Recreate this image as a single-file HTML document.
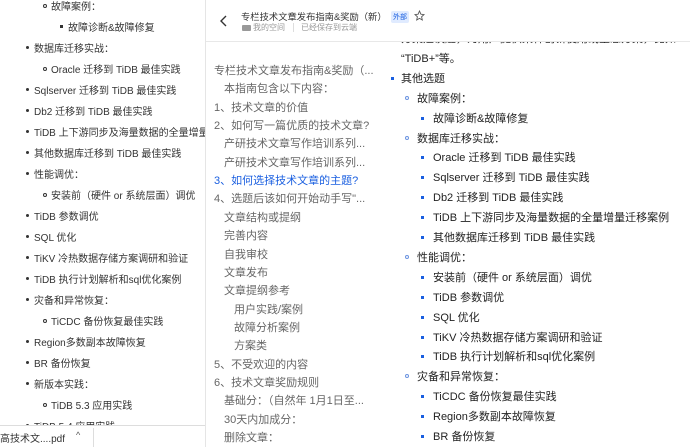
<!DOCTYPE html><html><head><meta charset="utf-8"><style>
*{margin:0;padding:0;box-sizing:border-box}
body{width:690px;height:447px;overflow:hidden;background:#fff;font-family:"Liberation Sans","Noto Sans CJK SC",sans-serif;position:relative}
.a{position:absolute;white-space:nowrap}
.l{font-size:10px;color:#333}
.t{font-size:11px;color:#666}
.r{font-size:11px;color:#222}
.d1{position:absolute;width:3px;height:3px;background:#333;border-radius:50%}
.c1{position:absolute;width:4px;height:4px;border:1px solid #333;border-radius:50%}
.s1{position:absolute;width:3px;height:3px;background:#333}
.bd{position:absolute;width:3px;height:3px;background:#1a5fe0}
.bc{position:absolute;width:4px;height:4px;border:1px solid #6b93e0;border-radius:50%}
</style></head><body>
<div id="L"></div>
<div style="position:absolute;left:0;top:425px;width:205px;height:22px;background:#fff;border-top:1px solid #ddd"></div>
<div class="a l" style="left:0;top:430px;font-size:10px">高技术文....pdf</div>
<div class="a" style="left:76px;top:430px;font-size:9px;color:#555">^</div>
<div style="position:absolute;left:93px;top:428px;width:1px;height:19px;background:#ddd"></div>
<div style="position:absolute;left:205px;top:0;width:1px;height:447px;background:#e5e5e5"></div>
<div id="R" style="position:absolute;left:0;top:0;width:690px;height:447px;overflow:hidden"></div>
<div style="position:absolute;left:206px;top:0;width:484px;height:42px;background:#fff;border-bottom:1px solid #e8e8e8"></div>
<svg class="a" style="left:219px;top:14px" width="10" height="14"><path d="M7 2L2 7L7 12" stroke="#333" stroke-width="1.4" fill="none"/></svg>
<div class="a" style="left:241px;top:9px;font-size:9.3px;color:#333">专栏技术文章发布指南&amp;奖励（新）</div>
<div class="a" style="left:391px;top:11px;font-size:7px;color:#1a5fe0;background:#e0ebff;padding:1px 2px;border-radius:2px">外部</div>
<svg class="a" style="left:414px;top:10px" width="11" height="11"><path d="M5.5 1L6.9 4.2L10 4.6L7.6 6.8L8.3 10L5.5 8.4L2.7 10L3.4 6.8L1 4.6L4.1 4.2Z" stroke="#555" stroke-width="0.9" fill="none"/></svg>
<div class="a" style="left:242px;top:25px;width:9px;height:6px;background:#999;border-radius:1px"></div>
<div class="a" style="left:253px;top:22px;font-size:8px;color:#999">我的空间</div>
<div class="a" style="left:293px;top:23px;width:1px;height:9px;background:#ddd"></div>
<div class="a" style="left:301px;top:22px;font-size:8px;color:#999">已经保存到云端</div>
<div id="T"></div>
<script>
var L=[[2,'故障案例：'],[3,'故障诊断&故障修复'],[1,'数据库迁移实战：'],[2,'Oracle 迁移到 TiDB 最佳实践'],[1,'Sqlserver 迁移到 TiDB 最佳实践'],[1,'Db2 迁移到 TiDB 最佳实践'],[1,'TiDB 上下游同步及海量数据的全量增量迁移案例'],[1,'其他数据库迁移到 TiDB 最佳实践'],[1,'性能调优：'],[2,'安装前（硬件 or 系统层面）调优'],[1,'TiDB 参数调优'],[1,'SQL 优化'],[1,'TiKV 冷热数据存储方案调研和验证'],[1,'TiDB 执行计划解析和sql优化案例'],[1,'灾备和异常恢复：'],[2,'TiCDC 备份恢复最佳实践'],[1,'Region多数副本故障恢复'],[1,'BR 备份恢复'],[1,'新版本实践：'],[2,'TiDB 5.3 应用实践'],[1,'TiDB 5.4 应用实践']];
var h='';L.forEach(function(x,i){var y=5+i*21,tx=[0,34,51,68][x[0]];var bx=tx-8;
h+='<div class="'+['','d1','c1','s1'][x[0]]+'" style="left:'+bx+'px;top:'+(y-1)+'px"></div><div class="a l" style="left:'+tx+'px;top:'+(y-7)+'px;max-width:'+(205-tx)+'px;overflow:hidden">'+x[1].replace('&','&amp;')+'</div>';});
document.getElementById('L').innerHTML=h;
var R=[[1,'方案建议题，为用户提供某种创新使用或生态方案，比如 Dis'],[0,'“TiDB+”等。'],[1,'其他选题'],[2,'故障案例：'],[3,'故障诊断&故障修复'],[2,'数据库迁移实战：'],[3,'Oracle 迁移到 TiDB 最佳实践'],[3,'Sqlserver 迁移到 TiDB 最佳实践'],[3,'Db2 迁移到 TiDB 最佳实践'],[3,'TiDB 上下游同步及海量数据的全量增量迁移案例'],[3,'其他数据库迁移到 TiDB 最佳实践'],[2,'性能调优：'],[3,'安装前（硬件 or 系统层面）调优'],[3,'TiDB 参数调优'],[3,' SQL 优化'],[3,'TiKV 冷热数据存储方案调研和验证'],[3,'TiDB 执行计划解析和sql优化案例'],[2,'灾备和异常恢复：'],[3,'TiCDC 备份恢复最佳实践'],[3,'Region多数副本故障恢复'],[3,' BR 备份恢复']];
h='';R.forEach(function(x,i){var y=38+i*19.9,tx=[401,401,417,433][x[0]];
if(x[0]==1)h+='<div class="bd" style="left:391px;top:'+(y-1)+'px"></div>';
if(x[0]==2)h+='<div class="bc" style="left:405px;top:'+(y-2)+'px"></div>';
if(x[0]==3)h+='<div class="bd" style="left:421px;top:'+(y-1)+'px"></div>';
h+='<div class="a r" style="left:'+tx+'px;top:'+(y-8)+'px">'+x[1].replace('&','&amp;')+'</div>';});
document.getElementById('R').innerHTML=h;
var T=[[0,'专栏技术文章发布指南&奖励（...'],[1,'本指南包含以下内容：'],[0,'1、技术文章的价值'],[0,'2、如何写一篇优质的技术文章?'],[1,'产研技术文章写作培训系列...'],[1,'产研技术文章写作培训系列...'],[0,'3、如何选择技术文章的主题?',1],[0,'4、选题后该如何开始动手写"...'],[1,'文章结构或提纲'],[1,'完善内容'],[1,'自我审校'],[1,'文章发布'],[1,'文章提纲参考'],[2,'用户实践/案例'],[2,'故障分析案例'],[2,'方案类'],[0,'5、不受欢迎的内容'],[0,'6、技术文章奖励规则'],[1,'基础分：（自然年 1月1日至...'],[1,'30天内加成分：'],[1,'删除文章：']];
h='';T.forEach(function(x,i){var y=70+i*18.35;h+='<div class="a t" style="left:'+(214+x[0]*10)+'px;top:'+(y-8)+'px;'+(x[2]?'color:#1a5fe0':'')+'">'+x[1].replace('&','&amp;')+'</div>';});
document.getElementById('T').innerHTML=h;
</script>
</body></html>
